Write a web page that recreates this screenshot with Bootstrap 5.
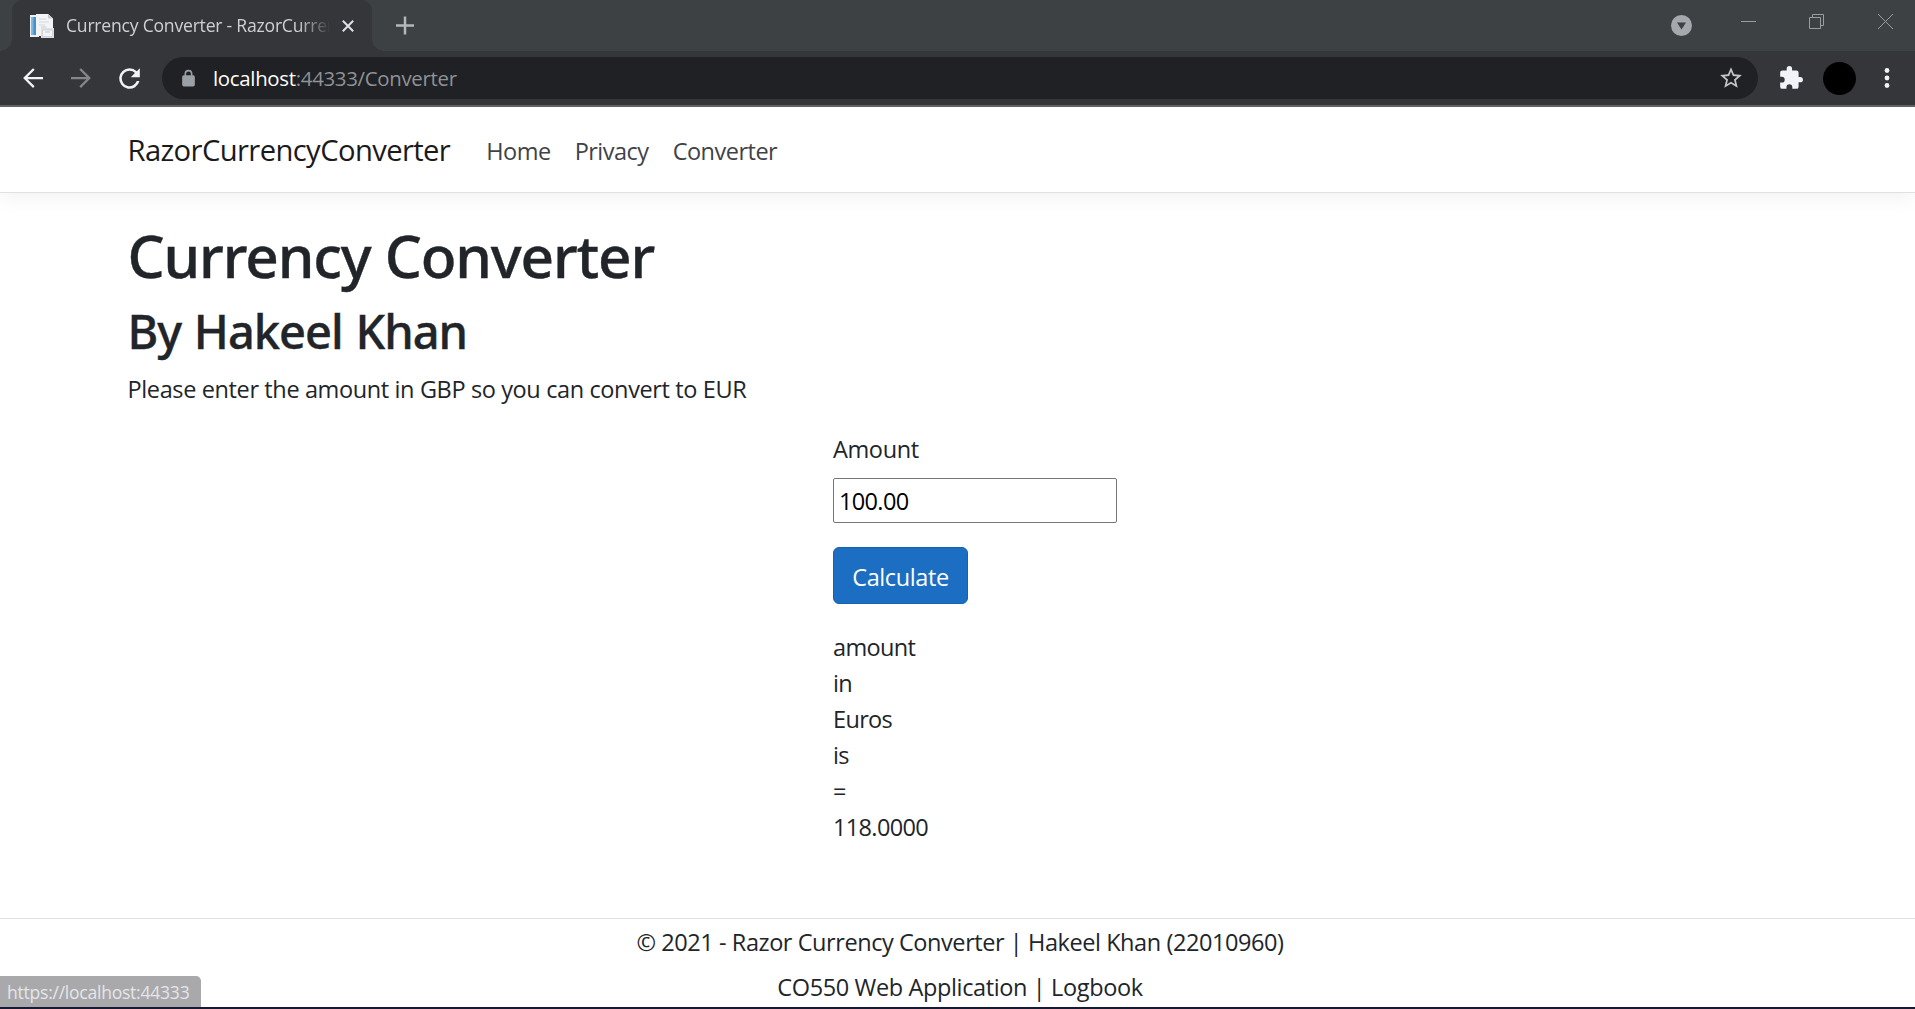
<!DOCTYPE html>
<html lang="en">
<head>
<meta charset="utf-8">
<meta name="viewport" content="width=device-width, initial-scale=1">
<title>Currency Converter - RazorCurrencyConverter</title>
<link rel="stylesheet" href="https://cdn.jsdelivr.net/npm/bootstrap@5.3.0/dist/css/bootstrap.min.css">
<style>
html, body { height: 100%; overflow: hidden; }
body { font-family: "Open Sans", "Noto Sans", sans-serif; font-size: 23.5px; line-height: 36px; letter-spacing: -.375px; color: #212529; background: #fff; }
svg { display: block; flex: none; }

/* browser window */
.tabstrip { height: 51px; background: #3d4143; }
.browser-tab { position: relative; width: 360px; height: 51px; margin-left: 12px; padding-left: 18px; background: #35363a; border-radius: 11px 11px 0 0; }
.browser-tab::before, .browser-tab::after { content: ""; position: absolute; bottom: 0; width: 12px; height: 12px; }
.browser-tab::before { left: -12px; background: radial-gradient(circle at 0 0, transparent 11.5px, #35363a 12px); }
.browser-tab::after { right: -12px; background: radial-gradient(circle at 100% 0, transparent 11.5px, #35363a 12px); }
.tab-title { width: 263px; margin: 0 13px 1px 12px; font-size: 17.6px; line-height: 34px; letter-spacing: -.23px; color: #ced0d3; white-space: nowrap; overflow: hidden; -webkit-mask-image: linear-gradient(90deg, #000 232px, transparent 265px); mask-image: linear-gradient(90deg, #000 232px, transparent 265px); }
.new-tab { margin: 16px 0 0 24px; }
.win-menu { margin: 15px 49px 0 auto; }
.win-btn { margin-top: 14px; }
.win-restore { margin-left: 53px; }
.win-close { margin-left: 54px; margin-right: 22px; }
.toolbar { height: 56px; padding: 0 25px 0 18px; background: #35363a; border-bottom: 2px solid #626265; }
.omnibox { height: 42px; margin: 0 20px 0 17px; padding: 0 14px 0 17px; border-radius: 21px; background: #202124; font-size: 20.4px; letter-spacing: -.3px; color: #8f9296; }
.url-text { margin-left: 15px; }
.avatar-dot { width: 33px; height: 33px; margin: 0 28px 0 19px; background: #000; }

/* page */
.page-edge { padding-left: 127.5px; padding-right: 126.5px; }
.site-nav { height: 86px; padding-top: 3px; padding-bottom: 1px; border-bottom: 1px solid #dee2e6; box-shadow: 0 6px 18px rgba(0,0,0,.05); }
.site-nav .navbar-brand { font-size: 29.2px; line-height: 45px; padding: 0; margin: 0 24px 0 0; letter-spacing: -.6px; color: #1a1a1a; }
.site-nav .navbar-nav .nav-link { padding: 0 12px; color: #3f4347; letter-spacing: -.5px; }
main { padding-top: 26px; }
h1, h2 { font-family: "Noto Sans", "Open Sans", sans-serif; font-weight: 500; -webkit-text-stroke: .4px #212529; }
h1 { font-size: 58.5px; line-height: 72px; margin: 0 0 11px; letter-spacing: -1.12px; }
h2 { font-size: 47px; line-height: 58px; margin: 0 0 11px; letter-spacing: -1px; word-spacing: 1.5px; }
.converter { width: 284px; margin-left: 705.5px; margin-top: 24px; }
.amount-field { width: 284px; height: 45px; margin: 11px 0 24px; padding: 1px 5px 0; border: 1px solid #767676; border-radius: 2px; color: #000; letter-spacing: -.65px; }
.btn-calc { --bs-btn-bg: #1b6ec2; --bs-btn-color: #fff; --bs-btn-border-color: #1861ac; font-size: 23.5px; line-height: 36px; width: 135px; height: 57px; padding: 2px 0 0; border-radius: 6px; letter-spacing: -.4px; }
.result { width: 80px; margin-top: 24.5px; letter-spacing: -.65px; }
.site-footer { height: 89px; padding: 5px 0 0 5px; border-top: 1px solid #dee2e6; }
.footer-line { height: 45px; letter-spacing: -.43px; }
.footer-line + .footer-line { letter-spacing: -.37px; }
.status-tip { position: absolute; left: 0; bottom: 2px; width: 201px; height: 31px; padding-left: 7px; background: #a9a9ab; color: #e4e6e9; border-top-right-radius: 5px; font-size: 17.6px; line-height: 33px; letter-spacing: -.27px; }
.taskbar-edge { height: 2px; background: #171a33; }
</style>
</head>
<body class="d-flex flex-column position-relative">

<div class="tabstrip d-flex align-items-start">
  <div class="browser-tab d-flex align-items-center">
    <svg width="24" height="24" viewBox="0 0 24 24">
      <path d="M0 1h9v22H0z" fill="#e9eff5"/><path d="M1.500 3h5v18h-5z" fill="#4a90c6"/><path d="M1.500 3h2v18h-2z" fill="#78b5df"/>
      <path d="M6 0h12l5 4.500V22H6z" fill="#f3f4f6"/><path d="M18 0v4.500h5z" fill="#c5cbd2"/>
      <path d="M9 5h7M9 8h10M9 11h6" stroke="#d5d9de"/>
      <path d="M11 12h5l1 2h7v10H11z" fill="#dde1e5"/><path d="M12.500 16h10v6.500h-10z" fill="#f4f5f6" stroke="#d0d4d9"/><path d="M15 18h5" stroke="#c3c8ce"/>
    </svg>
    <div class="tab-title">Currency Converter - RazorCurren</div>
    <svg width="12" height="12" viewBox="0 0 12 12"><path d="M.8.8l10.400 10.400M11.200.8L.8 11.200" stroke="#dee1e6" stroke-width="2"/></svg>
  </div>
  <svg class="new-tab" width="19" height="19" viewBox="0 0 19 19"><path d="M9 .5v18M0 9.500h18" stroke="#b4b7bb" stroke-width="2.500"/></svg>
  <svg class="win-menu" width="21" height="21" viewBox="0 0 21 21"><circle cx="10.500" cy="10.500" r="10.500" fill="#a5a8ac"/><path d="M6 7.500h9l-4.500 7z" fill="#3d4143"/></svg>
  <svg class="win-btn" width="15" height="15" viewBox="0 0 15 15"><path d="M0 7.500h15" stroke="#9a9da0"/></svg>
  <svg class="win-btn win-restore" width="15" height="15" viewBox="0 0 15 15"><path d="M.5 3.500h11v11H.5zM3.500 3.500v-3h11v11h-3" fill="none" stroke="#9a9da0"/></svg>
  <svg class="win-btn win-close" width="15" height="15" viewBox="0 0 15 15"><path d="M0 0l15 15M15 0L0 15" stroke="#9a9da0"/></svg>
</div>

<div class="toolbar d-flex align-items-center">
  <svg width="30" height="30" viewBox="0 0 24 24" fill="#f1f3f4"><path d="M20 11.100H7.600l5.700-5.700L12 4.100 4.100 12l7.900 7.900 1.300-1.300-5.700-5.700H20z"/></svg>
  <svg class="nav-forward" style="margin:0 18px" width="30" height="30" viewBox="0 0 24 24" fill="#85868a"><path d="M4 11.100h12.400l-5.700-5.700L12 4.100l7.900 7.900-7.900 7.900-1.300-1.300 5.700-5.700H4z"/></svg>
  <svg width="31" height="31" viewBox="0 0 24 24" fill="#f1f3f4"><path d="M17.650 6.350A7.960 7.960 0 0 0 12 4a8 8 0 1 0 7.730 10h-2.080A6 6 0 1 1 12 6c1.660 0 3.140.69 4.220 1.780L13 11h7V4z"/></svg>
  <div class="omnibox d-flex align-items-center flex-grow-1">
    <svg width="19" height="19" viewBox="0 0 24 24" fill="#9aa0a6"><path d="M18 8h-1V6A5 5 0 0 0 7 6v2H6a2 2 0 0 0-2 2v10c0 1.100.9 2 2 2h12a2 2 0 0 0 2-2V10a2 2 0 0 0-2-2zM9 8V6a3 3 0 0 1 6 0v2z"/></svg>
    <div class="url-text flex-grow-1"><span class="text-white">localhost</span>:44333/Converter</div>
    <svg width="26" height="26" viewBox="0 0 24 24" fill="#c3c6ca"><path d="M22 9.240l-7.190-.62L12 2 9.190 8.630 2 9.240l5.460 4.730L5.820 21 12 17.270 18.180 21l-1.630-7.030zM12 15.400l-3.760 2.270 1-4.280-3.320-2.880 4.380-.38L12 6.100l1.710 4.040 4.380.38-3.320 2.880 1 4.280z"/></svg>
  </div>
  <svg width="26" height="26" viewBox="0 0 24 24" fill="#f1f3f8"><path d="M20.500 11H19V7a2 2 0 0 0-2-2h-4V3.500a2.500 2.500 0 0 0-5 0V5H4a2 2 0 0 0-2 2v3.800h1.500a2.700 2.700 0 0 1 0 5.400H2V20a2 2 0 0 0 2 2h3.800v-1.500a2.700 2.700 0 0 1 5.400 0V22H17a2 2 0 0 0 2-2v-4h1.500a2.500 2.500 0 0 0 0-5z"/></svg>
  <div class="avatar-dot rounded-circle"></div>
  <svg width="6" height="20" viewBox="0 0 6 20" fill="#f1f3f4"><circle cx="3" cy="2.500" r="2.400"/><circle cx="3" cy="10" r="2.400"/><circle cx="3" cy="17.500" r="2.400"/></svg>
</div>

<nav class="site-nav navbar navbar-expand page-edge justify-content-start">
  <a class="navbar-brand" href="#">RazorCurrencyConverter</a>
  <ul class="navbar-nav">
    <li class="nav-item"><a class="nav-link" href="#">Home</a></li>
    <li class="nav-item"><a class="nav-link" href="#">Privacy</a></li>
    <li class="nav-item"><a class="nav-link" href="#">Converter</a></li>
  </ul>
</nav>

<main class="page-edge flex-grow-1">
  <h1>Currency Converter</h1>
  <h2>By Hakeel Khan</h2>
  <p class="m-0">Please enter the amount in GBP so you can convert to EUR</p>
  <form class="converter">
    <label class="d-block" for="amount">Amount</label>
    <input class="amount-field d-block" id="amount" type="text" value="100.00">
    <button class="btn btn-calc d-block" type="button">Calculate</button>
    <div class="result">
      <div>amount</div><div>in</div><div>Euros</div><div>is</div><div>=</div><div>118.0000</div>
    </div>
  </form>
</main>

<footer class="site-footer text-center">
  <div class="footer-line">© 2021 - Razor Currency Converter | Hakeel Khan (22010960)</div>
  <div class="footer-line">CO550 Web Application | Logbook</div>
</footer>
<div class="status-tip">https://localhost:44333</div>
<div class="taskbar-edge"></div>

<script src="https://cdn.jsdelivr.net/npm/bootstrap@5.3.0/dist/js/bootstrap.bundle.min.js"></script>
</body>
</html>
